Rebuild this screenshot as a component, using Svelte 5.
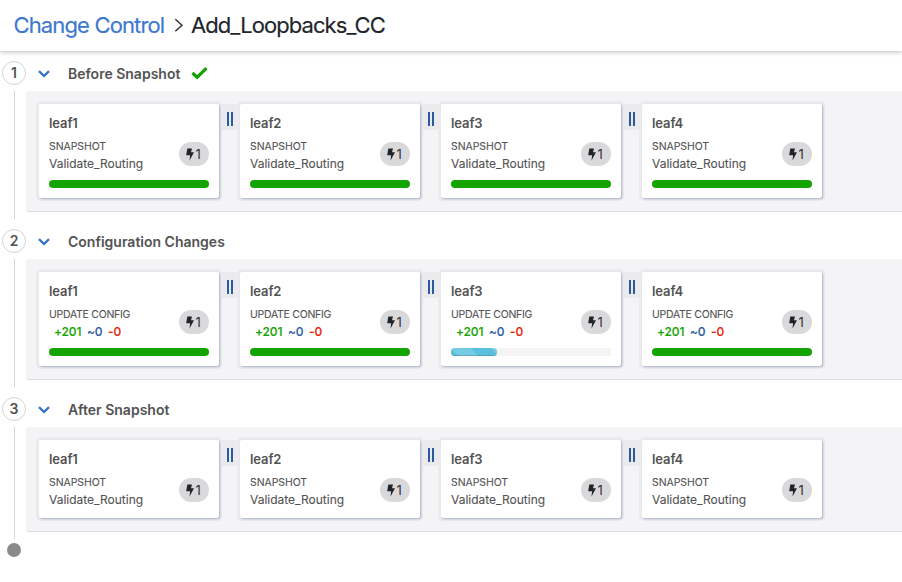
<script>
  const leaves = ['leaf1', 'leaf2', 'leaf3', 'leaf4'];
  const stages = [
    { name: 'Before Snapshot', done: true, kind: 'SNAPSHOT', progress: [100, 100, 100, 100] },
    { name: 'Configuration Changes', done: false, kind: 'UPDATE CONFIG', progress: [100, 100, 29, 100] },
    { name: 'After Snapshot', done: false, kind: 'SNAPSHOT', progress: null },
  ];
</script>

<div class="page">
  <header>
    <span class="link">Change Control</span>
    <svg class="sep" width="10" height="16" viewBox="0 0 10 16"><path d="M1.3 2.3 8 8.3 1.3 14.3" /></svg>
    <span class="title">Add_Loopbacks_CC</span>
  </header>

  <main>
    {#each stages as stage, i}
      <section>
        <div class="head">
          <span class="number">{i + 1}</span>
          <svg class="chevron" width="12" height="8" viewBox="0 0 12 8"><path d="M1 1.2 6 6 11 1.2" /></svg>
          <h2>{stage.name}</h2>
          {#if stage.done}
            <svg class="check" width="17" height="13" viewBox="0 0 17 13"><path d="M1.5 6 6.2 10.2 15.5 1.2" /></svg>
          {/if}
        </div>
        <div class="body">
          <div class="rail"></div>
          <div class="panel">
            {#each leaves as leaf, j}
              {#if j > 0}
                <div class="joint"><i></i><i></i></div>
              {/if}
              <div class="card" class:short={!stage.progress}>
                <div class="leaf">{leaf}</div>
                <div class="info">
                  <div class="action">
                    <div class="kind" class:config={stage.kind !== 'SNAPSHOT'}>{stage.kind}</div>
                    {#if stage.kind === 'SNAPSHOT'}
                      <div class="detail">Validate_Routing</div>
                    {:else}
                      <div class="diff"><b class="add">+201</b><b class="mod">~0</b><b class="del">-0</b></div>
                    {/if}
                  </div>
                  <div class="badge">
                    <svg width="8" height="13" viewBox="0 0 8 13"><path d="M1.3.5H6L5 4.2H8L3.5 12.5 4.1 7.2H.2Z" /></svg>
                    <span>1</span>
                  </div>
                </div>
                {#if stage.progress}
                  <div class="track" class:partial={stage.progress[j] < 100}>
                    <div class="fill" style="width: {stage.progress[j]}%"></div>
                  </div>
                {/if}
              </div>
            {/each}
          </div>
        </div>
      </section>
    {/each}
    <div class="end"></div>
  </main>
</div>

<style>
  .page {
    box-sizing: border-box;
    width: 902px;
    height: 582px;
    overflow: hidden;
    background: #fff;
    color: #535353;
    font-family: Inter, "Liberation Sans", sans-serif;
  }
  header {
    position: relative;
    box-sizing: border-box;
    height: 51px;
    padding: 0 0 1px 14px;
    display: flex;
    align-items: center;
    font-size: 22px;
    line-height: 48px;
    box-shadow: 0 1px 5px rgba(0, 0, 0, 0.27);
    white-space: nowrap;
    -webkit-text-stroke: 0.15px currentColor;
  }
  .link { width: 151px; margin-left: -0.5px; color: #3c78cf; letter-spacing: -0.86px; }
  .sep { margin: 0 7px 0 9.5px; fill: none; stroke: #333; stroke-width: 1.5; }
  .title { color: #212529; letter-spacing: -0.93px; }
  .head {
    box-sizing: border-box;
    height: 40px;
    padding: 4px 0 0 2px;
    display: flex;
    align-items: center;
  }
  .number {
    box-sizing: border-box;
    width: 24px;
    height: 24px;
    border: 1px solid #d4d4d4;
    border-radius: 50%;
    font-size: 14px;
    font-weight: 600;
    line-height: 22px;
    text-align: center;
  }
  .chevron { margin: 2px 18px 0 12px; fill: none; stroke: #3470cb; stroke-width: 2.3; }
  h2 { margin: 2px 0 0; font-size: 14px; line-height: 20px; font-weight: 600; }
  .check { margin-left: 10.5px; fill: none; stroke: #14a300; stroke-width: 3.2; }
  .body { display: flex; align-items: flex-start; }
  .rail { align-self: stretch; width: 1px; margin: 0 11px 0 14px; background: #d6d6d6; }
  .panel {
    box-sizing: border-box;
    flex: 1;
    margin-bottom: 7px;
    padding: 13px 0 12px 13px;
    display: flex;
    align-items: flex-start;
    background: #f4f4f6;
    border-bottom: 1px solid #d7dce5;
    border-radius: 3px 0 0 3px;
  }
  .card {
    box-sizing: border-box;
    width: 180px;
    height: 94px;
    padding: 9px 10px 10px;
    margin-bottom: 1px;
    background: #fff;
    border-radius: 2px;
    box-shadow: 1px 1px 2px rgba(72, 92, 145, 0.4), 0 0 0 3px #ebebee;
  }
  .card.short { height: 78px; }
  .joint {
    box-sizing: border-box;
    width: 15px;
    height: 26px;
    margin: 0 3px;
    padding: 8px 4.5px 4px 5px;
    display: flex;
    justify-content: space-between;
    background: #ebebee;
  }
  .joint i { width: 2px; height: 14px; background: #2c5aa0; }
  .leaf { height: 25px; font-size: 13px; line-height: 20px; font-weight: 600; letter-spacing: -0.1px; }
  .info { display: flex; justify-content: space-between; height: 42px; }
  .kind { font-size: 10.5px; line-height: 17px; letter-spacing: -0.08px; -webkit-text-stroke: 0.1px currentColor; }
  .kind.config { letter-spacing: -0.27px; }
  .detail { font-size: 12px; line-height: 18px; white-space: nowrap; -webkit-text-stroke: 0.1px currentColor; }
  .diff { display: flex; gap: 5.5px; padding-left: 5px; font-size: 12px; line-height: 18px; letter-spacing: -0.1px; }
  .diff b { font-weight: 500; -webkit-text-stroke: 0.15px currentColor; }
  .add { color: #14a300; }
  .mod { color: #2c5aa0; }
  .del { color: #e8230a; }
  .badge {
    box-sizing: border-box;
    width: 30px;
    height: 24px;
    margin-top: 4px;
    padding-left: 6.5px;
    display: flex;
    align-items: center;
    border-radius: 12px;
    background: #d9d9db;
    color: #333;
    font-size: 13px;
  }
  .badge svg { margin: 0 2px 0 0; fill: #212529; }
  .track { height: 8px; border-radius: 4px; }
  .partial { background: #f4f4f4; border-radius: 0; }
  .fill { height: 8px; border-radius: 4px; background: #14a300; }
  .partial .fill {
    background: linear-gradient(45deg, #75cae4 25%, #5bc0de 25% 50%, #75cae4 50% 75%, #5bc0de 75%) 0 0 / 40px 40px;
    box-shadow: inset 0 -1px 0 rgba(0, 0, 0, 0.15);
  }
  .end { width: 14px; height: 14px; margin: 4px 0 0 7px; border-radius: 50%; background: #8a8a8c; }
</style>
